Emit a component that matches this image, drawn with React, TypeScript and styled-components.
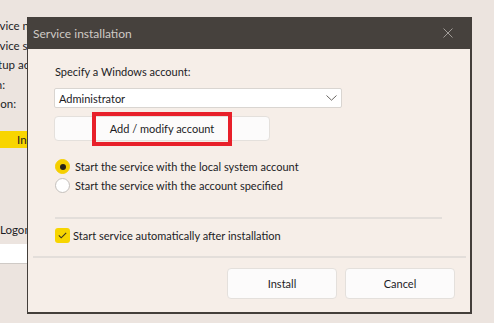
import React from "react";
import styled, { createGlobalStyle } from "styled-components";

const Global = createGlobalStyle`
  html, body { margin: 0; padding: 0; background: #ece4df; }
  body { font-family: Lato, "Liberation Sans", sans-serif; font-size: 11px; color: #1c1c1f; }
  * { box-sizing: border-box; }
`;

const Screen = styled.div`
  position: relative;
  width: 494px;
  height: 323px;
  overflow: hidden;
  background: #ece4df;
`;

const BgPane = styled.div`
  display: flex;
  flex-direction: column;
  padding-top: 16px;
  margin-left: -17px;
  width: 160px;
  font-size: 11.5px;
`;

const BgLabel = styled.div<{ $shift?: number }>`
  height: 19.5px;
  line-height: 19.5px;
  white-space: nowrap;
  margin-left: ${(p) => p.$shift ?? 0}px;
`;

const BgPrimary = styled.div`
  margin-top: 17px;
  height: 17px;
  line-height: 17px;
  background: #f8d500;
  padding-left: 34px;
  width: 140px;
`;

const BgLogon = styled.div`
  margin-top: 72px;
  height: 19.5px;
  line-height: 19.5px;
  padding-left: 17px;
`;

const BgInput = styled.div`
  margin-top: 5px;
  margin-left: 17px;
  height: 20px;
  background: #ffffff;
  border-bottom: 1px solid #cfcac6;
`;

const Dialog = styled.div`
  position: absolute;
  left: 27px;
  top: 17px;
  width: 445px;
  height: 297px;
  display: flex;
  flex-direction: column;
  background: #f6eee8;
  border-left: 1px solid #433e3a;
  border-right: 2px solid #433e3a;
  border-bottom: 2px solid #433e3a;
`;

const TitleBar = styled.div`
  height: 32px;
  flex: none;
  display: flex;
  align-items: center;
  justify-content: space-between;
  background: #46413d;
  padding: 0 17px 0 5px;
  color: #cfcac5;
  font-size: 12px;
`;

const CloseIcon = styled.svg`
  width: 10px;
  height: 10px;
  display: block;
`;

const Body = styled.div`
  flex: 1;
  display: flex;
  flex-direction: column;
  padding: 15px 0 0 26px;
`;

const FieldLabel = styled.div`
  height: 16px;
  line-height: 16px;
  padding-left: 1px;
`;

const Combo = styled.div`
  margin-top: 8px;
  width: 288px;
  height: 20px;
  display: flex;
  align-items: center;
  justify-content: space-between;
  background: #ffffff;
  border: 1px solid #d9d5d1;
  border-radius: 2px;
  padding: 0 4px 0 4px;
`;

const ButtonWrap = styled.div`
  position: relative;
  margin-top: 8px;
  width: 216px;
  height: 25px;
`;

const Button = styled.button<{ $w?: number; $h?: number }>`
  width: ${(p) => (p.$w ? `${p.$w}px` : "100%")};
  height: ${(p) => (p.$h ? `${p.$h}px` : "100%")};
  background: #fcfbfb;
  border: 1px solid #e4e0dc;
  border-radius: 4px;
  font: inherit;
  color: #1c1c1f;
  padding: 0;
  display: flex;
  align-items: center;
  justify-content: center;
`;

const Highlight = styled.div`
  position: absolute;
  left: 38px;
  top: -4px;
  width: 140px;
  height: 34px;
  border: 4px solid #e8202a;
  pointer-events: none;
`;

const RadioGroup = styled.div`
  margin-top: 16px;
  display: flex;
  flex-direction: column;
`;

const OptionRow = styled.label<{ $gap: number }>`
  height: 19px;
  display: flex;
  align-items: center;
  gap: ${(p) => p.$gap}px;
  padding-left: 1px;
  white-space: nowrap;
`;

const RadioDot = styled.span<{ $on?: boolean }>`
  width: 15px;
  height: 15px;
  border-radius: 50%;
  flex: none;
  display: flex;
  align-items: center;
  justify-content: center;
  background: ${(p) => (p.$on ? "#f5cf00" : "#ffffff")};
  border: 1px solid ${(p) => (p.$on ? "#f5cf00" : "#c4c0bc")};
  &::after {
    content: "";
    display: ${(p) => (p.$on ? "block" : "none")};
    width: 6px;
    height: 6px;
    border-radius: 50%;
    background: #2a2418;
  }
`;

const Separator = styled.div`
  margin-top: 22px;
  margin-left: 1px;
  width: 387px;
  height: 2px;
  background: #e3deda;
`;

const CheckRow = styled(OptionRow)`
  margin-top: 7px;
`;

const CheckBox = styled.span`
  width: 15px;
  height: 15px;
  flex: none;
  border-radius: 3px;
  background: #f7d500;
  display: flex;
  align-items: center;
  justify-content: center;
`;

const Footer = styled.div`
  flex: none;
  margin: 0 4px 0 5px;
  border-top: 2px solid #e3deda;
  padding: 10px 11px 13px 0;
  display: flex;
  justify-content: flex-end;
  gap: 8px;
`;

export default function App() {
  return (
    <>
      <Global />
      <Screen>
        <BgPane>
          <BgLabel>Service name:</BgLabel>
          <BgLabel>Service status:</BgLabel>
          <BgLabel $shift={-5}>Startup account:</BgLabel>
          <BgLabel $shift={-8}>Login:</BgLabel>
          <BgLabel $shift={-3}>Action:</BgLabel>
          <BgPrimary>Install</BgPrimary>
          <BgLogon>Logon</BgLogon>
          <BgInput />
        </BgPane>

        <Dialog>
          <TitleBar>
            <span>Service installation</span>
            <CloseIcon viewBox="0 0 10 10">
              <path d="M0.5 0.5 L9.5 9.5 M9.5 0.5 L0.5 9.5" stroke="#a19c98" strokeWidth="1" fill="none" />
            </CloseIcon>
          </TitleBar>
          <Body>
            <FieldLabel>Specify a Windows account:</FieldLabel>
            <Combo>
              <span>Administrator</span>
              <svg width="11" height="6" viewBox="0 0 11 6">
                <path d="M0.5 0.5 L5.5 5.2 L10.5 0.5" stroke="#6a6662" strokeWidth="1" fill="none" />
              </svg>
            </Combo>
            <ButtonWrap>
              <Button>Add / modify account</Button>
              <Highlight />
            </ButtonWrap>
            <RadioGroup>
              <OptionRow $gap={5}>
                <RadioDot $on />
                <span>Start the service with the local system account</span>
              </OptionRow>
              <OptionRow $gap={5}>
                <RadioDot />
                <span>Start the service with the account specified</span>
              </OptionRow>
            </RadioGroup>
            <Separator />
            <CheckRow $gap={3}>
              <CheckBox>
                <svg width="9" height="7" viewBox="0 0 9 7">
                  <path d="M0.8 3.4 L3.2 5.8 L8.2 0.8" stroke="#3a3320" strokeWidth="1.1" fill="none" />
                </svg>
              </CheckBox>
              <span>Start service automatically after installation</span>
            </CheckRow>
          </Body>
          <Footer>
            <Button $w={110} $h={31}>Install</Button>
            <Button $w={110} $h={31}>Cancel</Button>
          </Footer>
        </Dialog>
      </Screen>
    </>
  );
}
